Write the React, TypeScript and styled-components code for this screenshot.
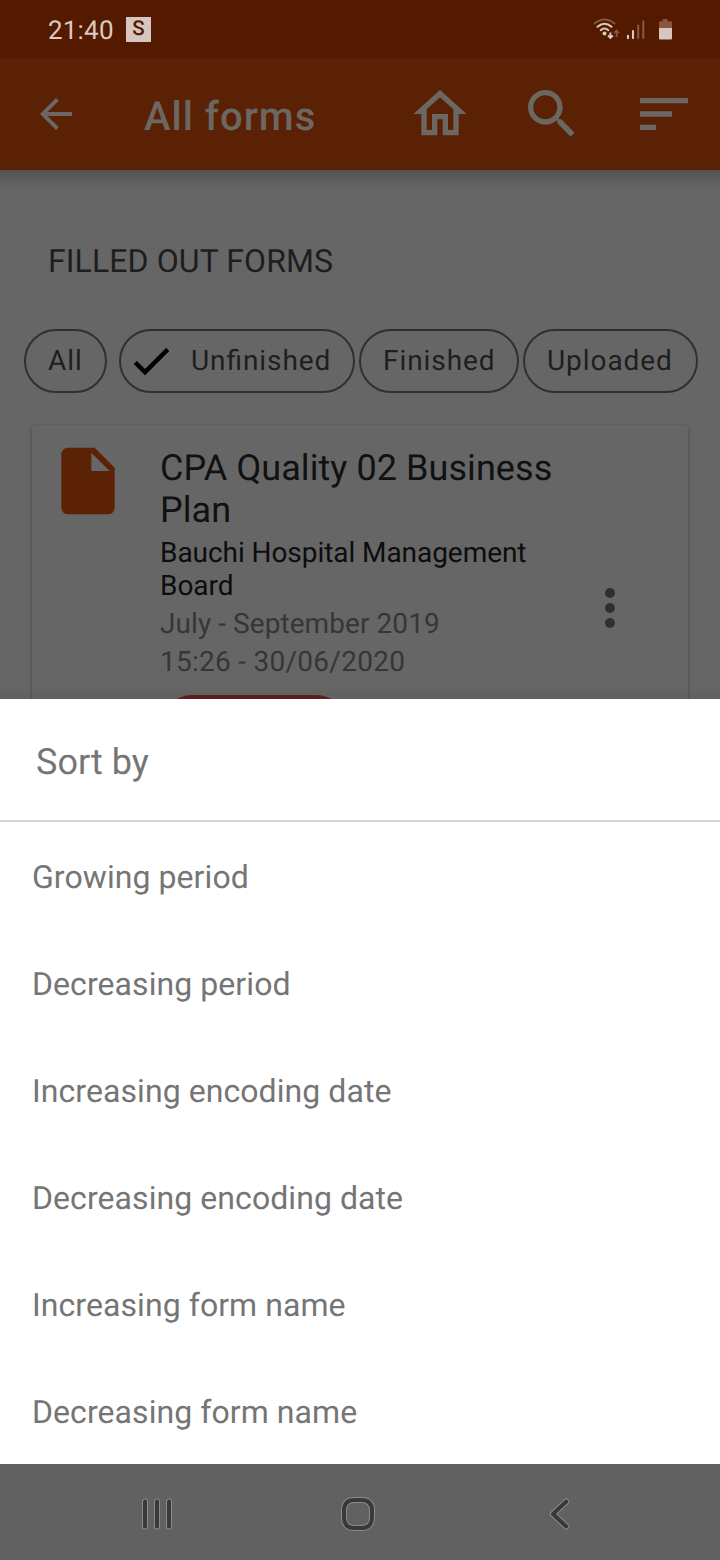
import React from "react";
import styled, { createGlobalStyle } from "styled-components";

const GlobalStyle = createGlobalStyle`
  *, *::before, *::after { box-sizing: border-box; }
  body {
    margin: 0;
    font-family: Roboto, sans-serif;
    background: #666;
    text-rendering: geometricPrecision;
  }
`;

const Screen = styled.div`
  width: 720px;
  height: 1560px;
  display: flex;
  flex-direction: column;
  overflow: hidden;
  background: #666666;
`;

const StatusBar = styled.header`
  flex: none;
  height: 58px;
  padding: 2px 47px 0 48px;
  display: flex;
  align-items: center;
  background: #531a00;
  color: #dcc9c0;
`;

const Clock = styled.span`
  width: 78px;
  padding-top: 2px;
  font-size: 26px;
  line-height: 30px;
  letter-spacing: 0.2px;
`;

const AppBadge = styled.span`
  width: 25px;
  height: 25px;
  margin-top: -2px;
  background: #d6c6bf;
  color: #531a00;
  font-size: 20.5px;
  font-weight: 500;
  line-height: 25px;
  text-align: center;
`;

const StatusIcons = styled.svg`
  display: block;
  margin: -4px 0 0 auto;
`;

const AppBar = styled.nav`
  flex: none;
  height: 112px;
  padding-left: 32px;
  padding-right: 24px;
  display: flex;
  align-items: center;
  background: #5a2104;
  color: #6c6763;
`;

const Title = styled.h1`
  flex: 1;
  margin: 6px 0 0 64px;
  font-size: 40px;
  line-height: 48px;
  font-weight: 500;
  letter-spacing: 1px;
`;

const Actions = styled.div`
  display: flex;
  gap: 48px;
`;

const Icon = styled.svg<{ $size: number }>`
  display: block;
  flex: none;
  width: ${(p) => p.$size}px;
  height: ${(p) => p.$size}px;
  fill: currentColor;
`;

const Content = styled.main`
  flex: none;
  height: 529px;
  overflow: hidden;
  display: flex;
  flex-direction: column;
  background:
    linear-gradient(to bottom, #515151, #5c5c5c 9px, #666666 20px, transparent 20px),
    linear-gradient(to top, #606060, #666666 14px);
`;

const SectionTitle = styled.h2`
  margin: 72px 0 0 48px;
  height: 38px;
  font-size: 32px;
  line-height: 38px;
  font-weight: 400;
  letter-spacing: 0.1px;
  color: #1e1e1e;
`;

const Chips = styled.div`
  flex: none;
  display: flex;
  margin: 49px 0 0 24px;
`;

const Chip = styled.div<{ $width: number; $gap?: number }>`
  flex: none;
  width: ${(p) => p.$width}px;
  height: 64px;
  margin-right: ${(p) => p.$gap ?? 4}px;
  padding: 0 0 2px 22px;
  display: flex;
  align-items: center;
  border: 2px solid #303030;
  border-radius: 32px;
  font-size: 28px;
  letter-spacing: 0.93px;
  font-feature-settings: "liga" 1;
  color: #1e1e1e;
  white-space: nowrap;
`;

const ChipCheck = styled(Icon)`
  margin: 2px 16px 0 -16px;
  color: #000;
  stroke: currentColor;
  stroke-width: 0.3;
`;

const Card = styled.article`
  flex: none;
  width: 656px;
  height: 420px;
  margin: 32px 0 0 32px;
  padding: 16px 48px 0 16px;
  display: flex;
  border-radius: 4px;
  box-shadow: 0 2px 4px rgba(0, 0, 0, 0.22), 0 0 2px rgba(0, 0, 0, 0.14);
`;

const CardBody = styled.div`
  width: 420px;
  margin-left: 32px;
  padding-top: 6px;
`;

const FormName = styled.h3`
  margin: 0;
  font-size: 36px;
  line-height: 42px;
  font-weight: 400;
  letter-spacing: 0.07px;
  color: #111111;
`;

const OrgName = styled.p`
  margin: 5px 0 0;
  font-size: 28px;
  line-height: 33px;
  letter-spacing: -0.06px;
  color: #0d0d0d;
`;

const Meta = styled.p<{ $spacing: number }>`
  margin: 5px 0 0;
  font-size: 28px;
  line-height: 33px;
  letter-spacing: ${(p) => p.$spacing}px;
  color: #363636;
`;

const StatusChip = styled.div`
  width: 188px;
  height: 64px;
  margin-top: 17px;
  border-radius: 32px;
  background: #5e1f1b;
`;

const MoreButton = styled(Icon)`
  margin-top: 137px;
  color: #303030;
`;

const Sheet = styled.section`
  flex: none;
  height: 765px;
  background: #ffffff;
  color: #757575;
`;

const SheetTitle = styled.h2`
  margin: 0;
  height: 123px;
  padding: 3px 0 0 36px;
  border-bottom: 2px solid #d4d4d4;
  font-size: 36px;
  line-height: 121px;
  font-weight: 400;
`;

const SortList = styled.ul`
  margin: 0;
  padding: 0;
  list-style: none;
`;

const SortOption = styled.li`
  height: 107px;
  padding: 2px 0 0 32px;
  font-size: 32px;
  line-height: 107px;
  letter-spacing: 0.07px;
`;

const SystemNav = styled.footer`
  flex: none;
  height: 96px;
  padding-top: 28px;
  padding-left: 137px;
  display: flex;
  gap: 161px;
  background: #616161;
`;

const NavIcon = styled.svg`
  display: block;
  flex: none;
  width: 40px;
  height: 44px;
  fill: none;
  stroke-linecap: round;
  stroke-linejoin: round;
`;

const sortOptions = [
  "Growing period",
  "Decreasing period",
  "Increasing encoding date",
  "Decreasing encoding date",
  "Increasing form name",
  "Decreasing form name",
];

function Outlined({ d }: { d: string }) {
  return (
    <NavIcon viewBox="0 0 40 44">
      <path d={d} stroke="#8a8a8a" strokeWidth="6" />
      <path d={d} stroke="#393939" strokeWidth="4" />
    </NavIcon>
  );
}

export default function App() {
  return (
    <Screen>
      <GlobalStyle />
      <StatusBar>
        <Clock>21:40</Clock>
        <AppBadge>S</AppBadge>
        <StatusIcons width="82" height="28" viewBox="0 0 82 28">
          <g fill="none" strokeLinecap="round" strokeWidth="2">
            <path d="M3.500 9.500Q13.500 1.500 23.500 9.500" stroke="#8a5541" />
            <path d="M6.500 12.800Q13.500 6.600 20.500 12.800" stroke="#dccac2" />
            <path d="M9.700 16.200Q13.500 12.800 17.300 16.200" stroke="#dccac2" />
          </g>
          <circle cx="13.500" cy="19.500" r="2" fill="#dccac2" />
          <path d="M19.400 18.500v5.300M17 21.500l2.400 2.500 2.400-2.500" fill="none" stroke="#dccac2" strokeWidth="1.9" />
          <path d="M25.600 23v-6M23.200 19l2.400-2.500 2.400 2.500" fill="none" stroke="#8a5541" strokeWidth="1.7" />
          <g strokeLinecap="round" strokeWidth="2.1">
            <path d="M37 21.800v2.300M42 17v7.100" stroke="#dccac2" />
            <path d="M47.200 11.500v12.600M52.300 7.300v16.800" stroke="#8a5541" />
          </g>
          <path d="M71.500 5h5v2.200h3.300q1.200 0 1.200 1.200V14H68V8.400q0-1.200 1.200-1.200h2.300z" fill="#8a5541" />
          <path d="M68 14h13v10.500q0 1-1 1H69q-1 0-1-1z" fill="#d6c6bf" />
        </StatusIcons>
      </StatusBar>

      <AppBar>
        <Icon $size={48} viewBox="0 0 24 24">
          <path d="M20 11H7.830l5.590-5.590L12 4l-8 8 8 8 1.410-1.410L7.830 13H20v-2z" />
        </Icon>
        <Title>All forms</Title>
        <Actions>
          <Icon $size={64} viewBox="0 0 24 24">
            <path d="M12 5.690l5 4.500V18h-2v-6H9v6H7v-7.810l5-4.500M12 3L2 12h3v8h6v-6h2v6h6v-8h3L12 3z" />
          </Icon>
          <Icon $size={64} viewBox="0 0 24 24">
            <path d="M15.500 14h-.790l-.280-.270C15.410 12.590 16 11.110 16 9.500 16 5.910 13.090 3 9.500 3S3 5.910 3 9.500 5.910 16 9.500 16c1.610 0 3.090-.590 4.230-1.570l.270.280v.790l5 4.990L20.490 19l-4.990-5zm-6 0C7.010 14 5 11.990 5 9.500S7.010 5 9.500 5 14 7.010 14 9.500 11.990 14 9.500 14z" />
          </Icon>
          <Icon $size={64} viewBox="0 0 24 24">
            <path d="M3 18h6v-2H3v2zM3 6v2h18V6H3zm0 7h12v-2H3v2z" />
          </Icon>
        </Actions>
      </AppBar>

      <Content>
        <SectionTitle>FILLED OUT FORMS</SectionTitle>
        <Chips>
          <Chip $width={83} $gap={12}>All</Chip>
          <Chip $width={236}>
            <ChipCheck $size={48} viewBox="0 0 24 24">
              <path d="M21 7L9 19l-5.500-5.500 1.410-1.410L9 16.170 19.590 5.590 21 7z" />
            </ChipCheck>
            Unfinished
          </Chip>
          <Chip $width={160}>Finished</Chip>
          <Chip $width={175}>Uploaded</Chip>
        </Chips>
        <Card>
          <Icon $size={80} viewBox="0 0 24 24" color="#5c2205">
            <path d="M13 9V3.500L18.500 9M6 2c-1.110 0-2 .890-2 2v16a2 2 0 0 0 2 2h12a2 2 0 0 0 2-2V8l-6-6H6z" />
          </Icon>
          <CardBody>
            <FormName>CPA Quality 02 Business Plan</FormName>
            <OrgName>Bauchi Hospital Management Board</OrgName>
            <Meta $spacing={0.07}>July - September 2019</Meta>
            <Meta $spacing={0.27}>15:26 - 30/06/2020</Meta>
            <StatusChip />
          </CardBody>
          <MoreButton $size={60} viewBox="0 0 24 24">
            <circle cx="12" cy="6" r="2" />
            <circle cx="12" cy="12" r="2" />
            <circle cx="12" cy="18" r="2" />
          </MoreButton>
        </Card>
      </Content>

      <Sheet>
        <SheetTitle>Sort by</SheetTitle>
        <SortList>
          {sortOptions.map((label) => (
            <SortOption key={label}>{label}</SortOption>
          ))}
        </SortList>
      </Sheet>

      <SystemNav>
        <Outlined d="M8 9.500v25M20 9.500v25M32 9.500v25" />
        <Outlined d="M16.500 8h7Q34 8 34 18.500v7Q34 36 23.500 36h-7Q6 36 6 25.500v-7Q6 8 16.500 8z" />
        <Outlined d="M27.300 9.500L14 22l13.300 12.500" />
      </SystemNav>
    </Screen>
  );
}
